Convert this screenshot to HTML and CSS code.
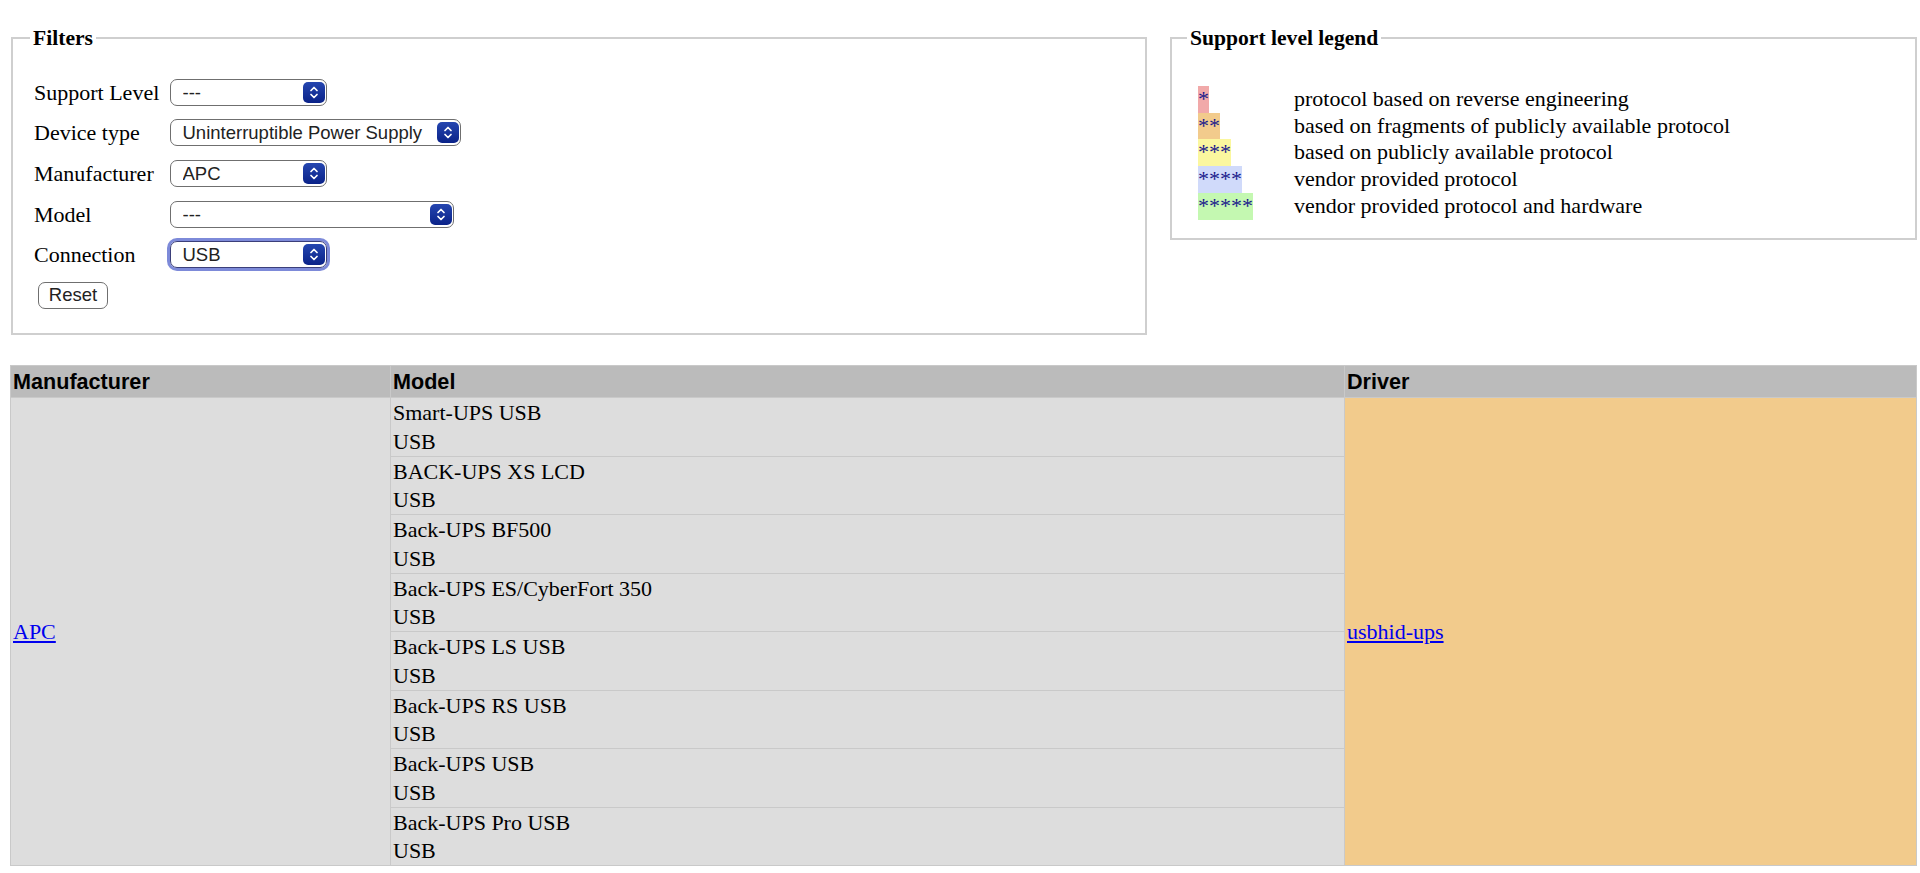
FILE: index.html
```html
<!doctype html>
<html>
    <head>
        <meta charset="utf-8">
        <title>Hardware compatibility list</title>
        <link rel="stylesheet" href="styles.css">
    </head>
    <body>

        <div class="top">
            <fieldset class="filters">
                <legend>Filters</legend>
                <div class="filter-grid">
                    <label for="level">Support Level</label>
                    <span class="sel w-short">
                        <select id="level"><option>---</option></select>
                        <svg class="arr" width="22" height="21" viewBox="0 0 22 21"><rect x="0" y="0" width="22" height="21" rx="5" fill="url(#g)"/><path d="M8 8.5 L11 5.5 L14 8.5 M8 12.5 L11 15.5 L14 12.5" stroke="#fff" stroke-width="1.7" fill="none" stroke-linecap="round" stroke-linejoin="round"/></svg>
                    </span>

                    <label for="devtype">Device type</label>
                    <span class="sel w-long">
                        <select id="devtype"><option>Uninterruptible Power Supply</option></select>
                        <svg class="arr" width="22" height="21" viewBox="0 0 22 21"><rect x="0" y="0" width="22" height="21" rx="5" fill="url(#g)"/><path d="M8 8.5 L11 5.5 L14 8.5 M8 12.5 L11 15.5 L14 12.5" stroke="#fff" stroke-width="1.7" fill="none" stroke-linecap="round" stroke-linejoin="round"/></svg>
                    </span>

                    <label for="manuf">Manufacturer</label>
                    <span class="sel w-short">
                        <select id="manuf"><option>APC</option></select>
                        <svg class="arr" width="22" height="21" viewBox="0 0 22 21"><rect x="0" y="0" width="22" height="21" rx="5" fill="url(#g)"/><path d="M8 8.5 L11 5.5 L14 8.5 M8 12.5 L11 15.5 L14 12.5" stroke="#fff" stroke-width="1.7" fill="none" stroke-linecap="round" stroke-linejoin="round"/></svg>
                    </span>

                    <label for="model">Model</label>
                    <span class="sel w-model">
                        <select id="model"><option>---</option></select>
                        <svg class="arr" width="22" height="21" viewBox="0 0 22 21"><rect x="0" y="0" width="22" height="21" rx="5" fill="url(#g)"/><path d="M8 8.5 L11 5.5 L14 8.5 M8 12.5 L11 15.5 L14 12.5" stroke="#fff" stroke-width="1.7" fill="none" stroke-linecap="round" stroke-linejoin="round"/></svg>
                    </span>

                    <label for="conn">Connection</label>
                    <span class="sel w-short focused">
                        <select id="conn"><option>USB</option></select>
                        <svg class="arr" width="22" height="21" viewBox="0 0 22 21"><rect x="0" y="0" width="22" height="21" rx="5" fill="url(#g)"/><path d="M8 8.5 L11 5.5 L14 8.5 M8 12.5 L11 15.5 L14 12.5" stroke="#fff" stroke-width="1.7" fill="none" stroke-linecap="round" stroke-linejoin="round"/></svg>
                    </span>

                    <button class="reset" type="button">Reset</button>
                </div>
            </fieldset>

            <fieldset class="legend-box">
                <legend>Support level legend</legend>
                <div class="levels">
                    <span><span class="stars l1">*</span></span>
                    <span>protocol based on reverse engineering</span>
                    <span><span class="stars l2">**</span></span>
                    <span>based on fragments of publicly available protocol</span>
                    <span><span class="stars l3">***</span></span>
                    <span>based on publicly available protocol</span>
                    <span><span class="stars l4">****</span></span>
                    <span>vendor provided protocol</span>
                    <span><span class="stars l5">*****</span></span>
                    <span>vendor provided protocol and hardware</span>
                </div>
            </fieldset>
        </div>

        <table class="hcl">
            <colgroup>
                <col class="c-manuf">
                <col class="c-model">
                <col>
            </colgroup>
            <thead>
                <tr><th>Manufacturer</th><th>Model</th><th>Driver</th></tr>
            </thead>
            <tbody>
                <tr>
                    <td class="manuf" rowspan="8"><a href="#">APC</a></td>
                    <td class="model">Smart-UPS USB<br>USB</td>
                    <td class="driver l2" rowspan="8"><a href="#">usbhid-ups</a></td>
                </tr>
                <tr><td class="model">BACK-UPS XS LCD<br>USB</td></tr>
                <tr><td class="model">Back-UPS BF500<br>USB</td></tr>
                <tr><td class="model">Back-UPS ES/CyberFort 350<br>USB</td></tr>
                <tr><td class="model">Back-UPS LS USB<br>USB</td></tr>
                <tr><td class="model">Back-UPS RS USB<br>USB</td></tr>
                <tr><td class="model">Back-UPS USB<br>USB</td></tr>
                <tr><td class="model">Back-UPS Pro USB<br>USB</td></tr>
            </tbody>
        </table>

        <svg width="0" height="0" class="defs">
            <defs>
                <linearGradient id="g" x1="0" y1="0" x2="0" y2="1">
                    <stop offset="0" stop-color="#2546b0"/>
                    <stop offset="1" stop-color="#0a2288"/>
                </linearGradient>
            </defs>
        </svg>

    </body>
</html>
```

FILE: styles.css
```css
body {
    margin: 0 3px 0 10px;
    font-family: "Liberation Serif", "Times New Roman", serif;
    font-size: 22px;
    color: #000;
    background: #fff;
}

.defs { position: absolute; }

.top {
    display: flex;
    align-items: flex-start;
    gap: 23px;
    padding-top: 26px;
}

fieldset {
    margin: 0;
    border: 2px solid #cfcfcf;
    min-width: 0;
}

legend {
    font-weight: bold;
    font-size: 21.6px;
    line-height: 24px;
    padding: 0 3px;
}

.filters {
    width: 1136px;
    box-sizing: border-box;
    margin-left: 1px;
    padding: 28.5px 17px 24px 17px;
}

.legend-box {
    flex: 1;
    padding: 36px 15px 18px 15px;
}

/* filter form */
.filter-grid {
    display: grid;
    grid-template-columns: 135.5px auto;
    align-items: center;
    justify-items: start;
    row-gap: 13.7px;
    margin-left: 4px;
}

.filter-grid label {
    line-height: 27px;
}

.sel {
    position: relative;
    display: inline-block;
    height: 27px;
    border-radius: 7px;
}

.sel select {
    -webkit-appearance: none;
    appearance: none;
    width: 100%;
    height: 27px;
    box-sizing: border-box;
    margin: 0;
    padding: 0 30px 0 12px;
    border: 1.5px solid #6f6f6f;
    border-radius: 7px;
    background: #fff;
    font-family: "Liberation Sans", Arial, sans-serif;
    font-size: 18.5px;
    color: #222;
    outline: none;
}

.sel .arr {
    position: absolute;
    right: 2px;
    top: 3px;
    pointer-events: none;
}

.w-short { width: 157px; }
.w-long { width: 291px; }
.w-model { width: 284px; }

.focused {
    box-shadow: 0 0 0 3px #7d8ad9;
}

.focused select {
    border-color: #3b3f7a;
}

.reset {
    grid-column: 1 / 3;
    margin-left: 4px;
    height: 27px;
    width: 70px;
    padding: 0;
    border: 1.5px solid #6f6f6f;
    border-radius: 7px;
    background: #fff;
    font-family: "Liberation Sans", Arial, sans-serif;
    font-size: 18.5px;
    color: #222;
}

/* legend */
.levels {
    display: grid;
    grid-template-columns: 96px auto;
    line-height: 26.7px;
    margin-left: 11px;
}

.stars {
    display: inline-block;
    height: 26.7px;
    color: #1a1a8c;
}

.l1 { background: #f1a9a9; }
.l2 { background: #f2cb8c; }
.l3 { background: #fbf79f; }
.l4 { background: #d0dafa; }
.l5 { background: #c4f8b1; }

/* results table */
.hcl {
    width: 100%;
    margin-top: 30.5px;
    table-layout: fixed;
    border-collapse: separate;
    border-spacing: 1px;
    background: #c9c9c9;
}

.c-manuf { width: 379px; }
.c-model { width: 953px; }

.hcl th {
    background: #bbbbbb;
    font-family: "Liberation Sans", Arial, sans-serif;
    font-weight: bold;
    font-size: 21.6px;
    text-align: left;
    line-height: 25px;
    padding: 3px 2px;
}

.hcl td {
    padding: 0 2px;
    line-height: 28.7px;
    vertical-align: middle;
}

.hcl td.model {
    padding-top: 1px;
    line-height: 28.25px;
}

.manuf, .model {
    background: #dddddd;
}

.driver.l2 {
    background: #f2cb8c;
}

.hcl a {
    color: #0000ee;
}
```
